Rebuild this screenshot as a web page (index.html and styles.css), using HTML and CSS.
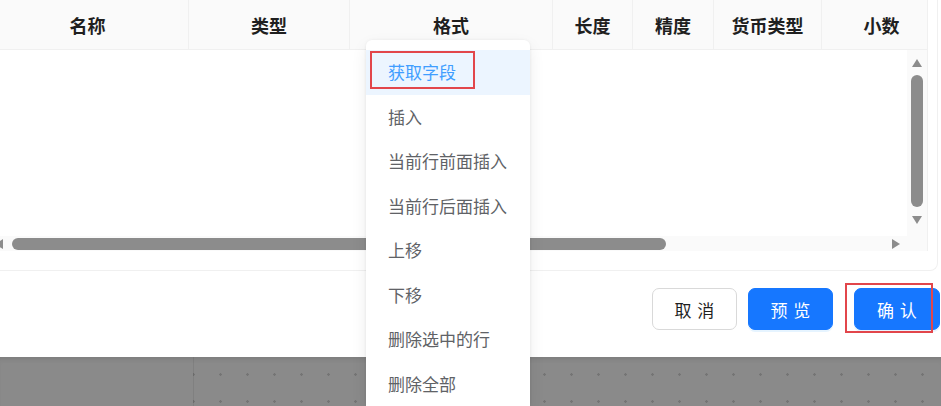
FILE: index.html
```html
<!DOCTYPE html>
<html lang="zh-CN">

<head>
    <meta charset="UTF-8">
    <meta name="viewport" content="width=device-width, initial-scale=1.0">
    <title>字段设置</title>
    <link rel="stylesheet" href="styles.css">
</head>

<body>

    <div class="page">
        <div class="dialog">
            <div class="table-card">
                <div class="field-table">
                    <div class="table-head">
                        <div class="th">名称</div>
                        <div class="th">类型</div>
                        <div class="th">格式</div>
                        <div class="th">长度</div>
                        <div class="th">精度</div>
                        <div class="th">货币类型</div>
                        <div class="th th-last">小数</div>
                    </div>
                    <div class="table-body">
                        <div class="rows"></div>
                        <div class="vscroll">
                            <span class="arrow arrow-up"></span>
                            <span class="vthumb"></span>
                            <span class="arrow arrow-down"></span>
                        </div>
                    </div>
                    <div class="hscroll">
                        <span class="arrow arrow-left"></span>
                        <span class="hthumb"></span>
                        <span class="arrow arrow-right"></span>
                    </div>
                </div>
            </div>

            <div class="dialog-footer">
                <button class="btn btn-default"><span>取消</span></button>
                <button class="btn btn-primary btn-preview"><span>预览</span></button>
                <button class="btn btn-primary btn-ok"><span>确认</span></button>
            </div>
        </div>

        <div class="mask">
            <div class="mask-grid"></div>
        </div>
    </div>

    <!-- right click menu on the table -->
    <ul class="context-menu">
        <li class="menu-item active">获取字段</li>
        <li class="menu-item">插入</li>
        <li class="menu-item">当前行前面插入</li>
        <li class="menu-item">当前行后面插入</li>
        <li class="menu-item">上移</li>
        <li class="menu-item">下移</li>
        <li class="menu-item">删除选中的行</li>
        <li class="menu-item">删除全部</li>
    </ul>

    <div class="mark mark-menu"></div>
    <div class="mark mark-ok"></div>

</body>

</html>
```

FILE: styles.css
```css
html,
body {
    margin: 0;
    padding: 0;
}

body {
    width: 941px;
    height: 406px;
    overflow: hidden;
    position: relative;
    background-color: #fff;
    font-family: "Noto Sans CJK SC", "Noto Sans", sans-serif;
}

.page {
    display: flex;
    flex-direction: column;
    height: 406px;
}

.dialog {
    background-color: #fff;
}

.table-card {
    box-sizing: border-box;
    width: 952px;
    margin-left: -14px;
    padding: 0 9px 19px 0;
    border: 1px solid #f0f0f0;
    border-top: none;
    border-radius: 0 0 8px 8px;
}

.field-table {
    border-right: 1px solid #f0f0f0;
}

.table-head {
    display: grid;
    grid-template-columns: 202px 161px 203px 80px 81px 108px 1fr;
    height: 49px;
    background-color: #fafafa;
    border-bottom: 1px solid #f0f0f0;
}

.th {
    display: flex;
    align-items: center;
    justify-content: center;
    border-right: 1px solid #f0f0f0;
    font-size: 18px;
    font-weight: 700;
    color: #1f1f1f;
}

.th-last {
    border-right: none;
    padding-left: 14px;
}

.table-body {
    display: flex;
    height: 186px;
}

.rows {
    flex: 1;
    background-color: #fff;
}

.vscroll {
    width: 20px;
    background-color: #fafafa;
    display: flex;
    flex-direction: column;
    align-items: center;
    padding-top: 9px;
    gap: 8px;
}

.vthumb {
    width: 12px;
    height: 132px;
    border-radius: 6px;
    background-color: #8c8c8c;
}

.hscroll {
    display: flex;
    align-items: center;
    height: 15px;
    padding: 0 27px 0 8px;
    background-color: #fafafa;
}

.hthumb {
    width: 654px;
    height: 12px;
    margin-left: 9px;
    border-radius: 6px;
    background-color: #8c8c8c;
}

.arrow {
    width: 0;
    height: 0;
    border-style: solid;
    border-color: transparent;
}

.arrow-up {
    border-width: 0 5px 8px 5px;
    border-bottom-color: #8c8c8c;
}

.arrow-down {
    border-width: 8px 5px 0 5px;
    border-top-color: #8c8c8c;
    margin-top: 1px;
}

.arrow-left {
    border-width: 5px 8px 5px 0;
    border-right-color: #8c8c8c;
}

.arrow-right {
    border-width: 5px 0 5px 8px;
    border-left-color: #8c8c8c;
    margin-left: auto;
}

.dialog-footer {
    display: flex;
    justify-content: flex-end;
    height: 86px;
    box-sizing: border-box;
    padding: 17px 1px 0 0;
}

.btn {
    width: 85px;
    height: 42px;
    border-radius: 7px;
    font-family: "Noto Sans CJK SC", sans-serif;
    font-size: 17px;
    cursor: pointer;
    padding: 0;
}

.btn span {
    letter-spacing: 0.34em;
    margin-right: -0.34em;
}

.btn-default {
    background-color: #fff;
    border: 1px solid #d9d9d9;
    color: #1f1f1f;
}

.btn-primary {
    background-color: #1677ff;
    border: 1px solid #1677ff;
    color: #fff;
    box-shadow: 0 2px 0 rgba(5, 145, 255, 0.1);
}

.btn-preview {
    margin-left: 11px;
}

.btn-ok {
    width: 86px;
    margin-left: 21px;
}

.mask {
    flex: 1;
    display: flex;
    background-color: #8a8a8a;
    box-shadow: inset 0 5px 5px -3px rgba(0, 0, 0, 0.1);
}

.mask-grid {
    flex: 1;
    margin-left: 193px;
    border-left: 1px solid rgba(0, 0, 0, 0.07);
    background-image: radial-gradient(circle, rgba(0, 0, 0, 0.16) 1px, transparent 1.5px);
    background-size: 27px 27px;
    background-position: -14px 4px;
}

.context-menu {
    position: absolute;
    left: 366px;
    top: 40px;
    box-sizing: border-box;
    width: 164px;
    height: 366px;
    overflow: hidden;
    margin: 0;
    padding: 10px 0 0 0;
    list-style: none;
    background-color: #fff;
    border-radius: 6px 6px 0 0;
    box-shadow: 0 6px 16px rgba(0, 0, 0, 0.08), 0 3px 6px -4px rgba(0, 0, 0, 0.12), 0 0 3px rgba(0, 0, 0, 0.06);
}

.menu-item {
    height: 44.5px;
    line-height: 44.5px;
    padding-left: 22px;
    font-size: 17px;
    color: #606266;
}

.menu-item.active {
    background-color: #ecf5ff;
    color: #409eff;
}

.mark {
    position: absolute;
    border: 2px solid #e2464b;
    box-sizing: border-box;
}

.mark-menu {
    left: 370px;
    top: 51px;
    width: 105px;
    height: 38px;
}

.mark-ok {
    left: 845px;
    top: 283px;
    width: 88px;
    height: 50px;
}
```
